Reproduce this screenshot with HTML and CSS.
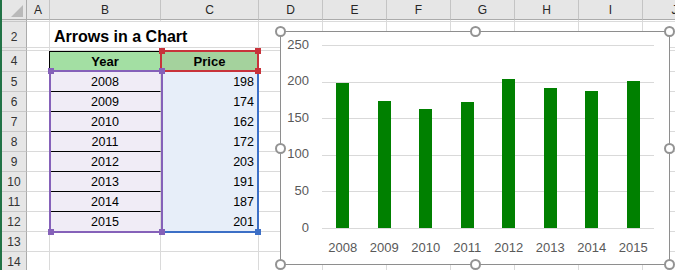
FILE: index.html
```html
<!DOCTYPE html>
<html lang="en">
<head>
<meta charset="utf-8">
<title>Arrows in a Chart</title>
<link rel="stylesheet" href="styles.css">
</head>
<body>
<div class="app">
  <div class="strip"></div>
  <div class="wrap">
    <div class="sheet">
      <!-- column headers -->
      <div class="corner"><svg width="25" height="19" viewBox="0 0 25 19"><polygon points="21,5 21,17 9,17" fill="#b9b9b9"/></svg></div>
      <div class="ch">A</div><div class="ch">B</div><div class="ch">C</div><div class="ch">D</div><div class="ch">E</div><div class="ch">F</div><div class="ch">G</div><div class="ch">H</div><div class="ch">I</div><div class="ch">J</div>
      <!-- row 1 (tiny) -->
      <div class="rh"></div><div class="c"></div><div class="c"></div><div class="c"></div><div class="c"></div><div class="c"></div><div class="c"></div><div class="c"></div><div class="c"></div><div class="c"></div><div class="c"></div>
      <!-- row 2 -->
      <div class="rh tall">2</div><div class="c"></div><div class="c title-cell"><span class="title">Arrows in a Chart</span></div><div class="c"></div><div class="c"></div><div class="c"></div><div class="c"></div><div class="c"></div><div class="c"></div><div class="c"></div><div class="c"></div>
      <!-- row 3 (hidden-ish) -->
      <div class="rh"></div><div class="c"></div><div class="c"></div><div class="c"></div><div class="c"></div><div class="c"></div><div class="c"></div><div class="c"></div><div class="c"></div><div class="c"></div><div class="c"></div>
      <!-- row 4 -->
      <div class="rh">4</div><div class="c edge-black"></div><div class="c hdr hdr-year">Year</div><div class="c hdr hdr-price">Price</div><div class="c"></div><div class="c"></div><div class="c"></div><div class="c"></div><div class="c"></div><div class="c"></div><div class="c"></div>
      <!-- rows 5-12 -->
      <div class="rh">5</div><div class="c"></div><div class="c yr">2008</div><div class="c pr">198</div><div class="c"></div><div class="c"></div><div class="c"></div><div class="c"></div><div class="c"></div><div class="c"></div><div class="c"></div>
      <div class="rh">6</div><div class="c"></div><div class="c yr">2009</div><div class="c pr">174</div><div class="c"></div><div class="c"></div><div class="c"></div><div class="c"></div><div class="c"></div><div class="c"></div><div class="c"></div>
      <div class="rh">7</div><div class="c"></div><div class="c yr">2010</div><div class="c pr">162</div><div class="c"></div><div class="c"></div><div class="c"></div><div class="c"></div><div class="c"></div><div class="c"></div><div class="c"></div>
      <div class="rh">8</div><div class="c"></div><div class="c yr">2011</div><div class="c pr">172</div><div class="c"></div><div class="c"></div><div class="c"></div><div class="c"></div><div class="c"></div><div class="c"></div><div class="c"></div>
      <div class="rh">9</div><div class="c"></div><div class="c yr">2012</div><div class="c pr">203</div><div class="c"></div><div class="c"></div><div class="c"></div><div class="c"></div><div class="c"></div><div class="c"></div><div class="c"></div>
      <div class="rh">10</div><div class="c"></div><div class="c yr">2013</div><div class="c pr">191</div><div class="c"></div><div class="c"></div><div class="c"></div><div class="c"></div><div class="c"></div><div class="c"></div><div class="c"></div>
      <div class="rh">11</div><div class="c"></div><div class="c yr">2014</div><div class="c pr">187</div><div class="c"></div><div class="c"></div><div class="c"></div><div class="c"></div><div class="c"></div><div class="c"></div><div class="c"></div>
      <div class="rh">12</div><div class="c"></div><div class="c yr last">2015</div><div class="c pr">201</div><div class="c"></div><div class="c"></div><div class="c"></div><div class="c"></div><div class="c"></div><div class="c"></div><div class="c"></div>
      <!-- rows 13-14 -->
      <div class="rh">13</div><div class="c"></div><div class="c"></div><div class="c"></div><div class="c"></div><div class="c"></div><div class="c"></div><div class="c"></div><div class="c"></div><div class="c"></div><div class="c"></div>
      <div class="rh">14</div><div class="c"></div><div class="c"></div><div class="c"></div><div class="c"></div><div class="c"></div><div class="c"></div><div class="c"></div><div class="c"></div><div class="c"></div><div class="c"></div>
    </div>

    <!-- range highlights -->
    <div class="sel sel-blue"></div>
    <div class="sel sel-red"></div>
    <div class="sel sel-purple"></div>
    <div class="knob knob-red" style="left:157px;top:48px"></div>
    <div class="knob knob-red" style="left:253px;top:48px"></div>
    <div class="knob knob-red" style="left:253px;top:68px"></div>
    <div class="knob knob-blue" style="left:253px;top:229px"></div>
    <div class="knob knob-purple" style="left:46px;top:68px"></div>
    <div class="knob knob-purple" style="left:157px;top:68px"></div>
    <div class="knob knob-purple" style="left:46px;top:229px"></div>
    <div class="knob knob-purple" style="left:157px;top:229px"></div>

    <!-- chart -->
    <div class="chart">
      <div class="chart-body">
        <div class="yaxis"><span>250</span><span>200</span><span>150</span><span>100</span><span>50</span><span>0</span></div>
        <div class="plot">
          <div class="gridlines"><i></i><i></i><i></i><i></i><i></i></div>
          <div class="bars">
            <div class="cat"><div class="bar" style="height:144.9px"></div></div>
            <div class="cat"><div class="bar" style="height:127.4px"></div></div>
            <div class="cat"><div class="bar" style="height:118.6px"></div></div>
            <div class="cat"><div class="bar" style="height:125.9px"></div></div>
            <div class="cat"><div class="bar" style="height:148.6px"></div></div>
            <div class="cat"><div class="bar" style="height:139.8px"></div></div>
            <div class="cat"><div class="bar" style="height:136.9px"></div></div>
            <div class="cat"><div class="bar" style="height:147.1px"></div></div>
          </div>
        </div>
        <div class="xaxis"><span>2008</span><span>2009</span><span>2010</span><span>2011</span><span>2012</span><span>2013</span><span>2014</span><span>2015</span></div>
      </div>
      <div class="h h-l h-t"></div>
      <div class="h h-c h-t"></div>
      <div class="h h-r h-t"></div>
      <div class="h h-l h-m"></div>
      <div class="h h-r h-m"></div>
      <div class="h h-l h-b"></div>
      <div class="h h-c h-b"></div>
      <div class="h h-r h-b"></div>
    </div>
  </div>
</div>
</body>
</html>
```

FILE: styles.css
```css
html, body {
  margin: 0;
  padding: 0;
  overflow: hidden;
  background: #fff;
}
body {
  font-family: "Liberation Sans", Arial, sans-serif;
  width: 675px;
  height: 270px;
}
.app {
  display: flex;
  height: 270px;
}
.strip {
  width: 2px;
  flex: none;
  background: #217346;
}
.wrap {
  position: relative;
  flex: none;
}
.sheet {
  display: grid;
  grid-template-columns: 25px 23px 111px 98px repeat(7, 64px);
  grid-template-rows: 20px 2px 26px 3px 21px repeat(10, 20px);
}
.sheet > div {
  box-sizing: border-box;
  min-width: 0;
}
.corner {
  background: #e6e6e6;
  border-right: 1px solid #ababab;
  border-bottom: 1px solid #ababab;
}
.corner svg { display: block; }
.ch {
  background: #e6e6e6;
  border-right: 1px solid #c4c4c4;
  border-bottom: 1px solid #ababab;
  display: flex;
  align-items: center;
  justify-content: center;
  font-size: 12px;
  color: #262626;
}
.rh {
  background: #e6e6e6;
  border-right: 1px solid #ababab;
  border-bottom: 1px solid #c8c8c8;
  display: flex;
  align-items: center;
  justify-content: center;
  font-size: 12px;
  color: #333;
  overflow: hidden;
}
.rh.tall {
  align-items: flex-end;
  padding-bottom: 3px;
}
.c {
  border-right: 1px solid #dadada;
  border-bottom: 1px solid #dadada;
  font-size: 12.5px;
  color: #000;
}
.title-cell {
  display: flex;
  align-items: flex-end;
  padding: 0 0 1px 4px;
  overflow: visible;
  border-right-color: transparent;
}
.title {
  font-weight: bold;
  font-size: 16px;
  line-height: 18px;
  white-space: nowrap;
}
.edge-black {
  border-right-color: #000;
}
.hdr {
  display: flex;
  align-items: center;
  justify-content: center;
  font-weight: bold;
  font-size: 13px;
  border-top: 1px solid #000;
}
.hdr-year {
  background: #a3dfa3;
}
.hdr-price {
  background: #a4d29d;
}
.yr {
  background: #f0ecf6;
  border-bottom-color: #000;
  display: flex;
  align-items: center;
  justify-content: center;
}
.yr.last {
  border-bottom-color: #f0ecf6;
}
.pr {
  background: #e7eef9;
  border-bottom-color: transparent;
  display: flex;
  align-items: center;
  justify-content: flex-end;
  padding-right: 4px;
}

/* range highlight overlays */
.sel {
  position: absolute;
  box-sizing: border-box;
  border: 2px solid;
}
.sel-blue {
  left: 158px;
  top: 70px;
  width: 99px;
  height: 163px;
  border-color: #3c6fc6;
  border-left: none;
  border-top: none;
}
.sel-red {
  left: 158px;
  top: 50px;
  width: 99px;
  height: 22px;
  border-color: #c8333b;
}
.sel-purple {
  left: 47px;
  top: 70px;
  width: 114px;
  height: 163px;
  border-color: #8561b9;
}
.knob {
  position: absolute;
  width: 6px;
  height: 6px;
}
.knob-red { background: #c8333b; }
.knob-blue { background: #3c6fc6; }
.knob-purple { background: #8561b9; }

/* chart */
.chart {
  position: absolute;
  left: 278px;
  top: 31px;
  width: 390px;
  height: 234px;
  box-sizing: border-box;
  border: 1px solid #8e8e8e;
  background: #fff;
}
.chart-body {
  display: grid;
  grid-template-columns: 28px 332px;
  grid-template-rows: 184px auto;
  column-gap: 13px;
  padding-top: 13px;
  color: #595959;
  font-size: 13px;
}
.yaxis {
  grid-row: 1;
  grid-column: 1;
  display: flex;
  flex-direction: column;
  margin-top: -18.3px;
  text-align: right;
}
.yaxis span {
  height: 36.6px;
  line-height: 36.6px;
  flex: none;
}
.plot {
  grid-row: 1;
  grid-column: 2;
  display: grid;
  box-sizing: border-box;
  border-bottom: 1px solid #d9d9d9;
}
.gridlines, .bars {
  grid-area: 1 / 1;
}
.gridlines {
  display: flex;
  flex-direction: column;
}
.gridlines i {
  flex: 1;
  border-top: 1px solid #d9d9d9;
}
.bars {
  display: flex;
  align-items: flex-end;
}
.cat {
  flex: 1;
  display: flex;
  justify-content: center;
}
.bar {
  width: 13px;
  background: #008000;
}
.xaxis {
  grid-row: 2;
  grid-column: 2;
  display: flex;
  padding-top: 11px;
  line-height: 15px;
}
.xaxis span {
  flex: 1;
  text-align: center;
}
.h {
  position: absolute;
  width: 11px;
  height: 11px;
  box-sizing: border-box;
  border: 2px solid #939393;
  border-radius: 50%;
  background: #fff;
}
.h-l { left: -6px; }
.h-c { left: calc(50% - 5px); }
.h-r { right: -6px; }
.h-t { top: -6px; }
.h-m { top: calc(50% - 5px); }
.h-b { bottom: -6px; }
```
